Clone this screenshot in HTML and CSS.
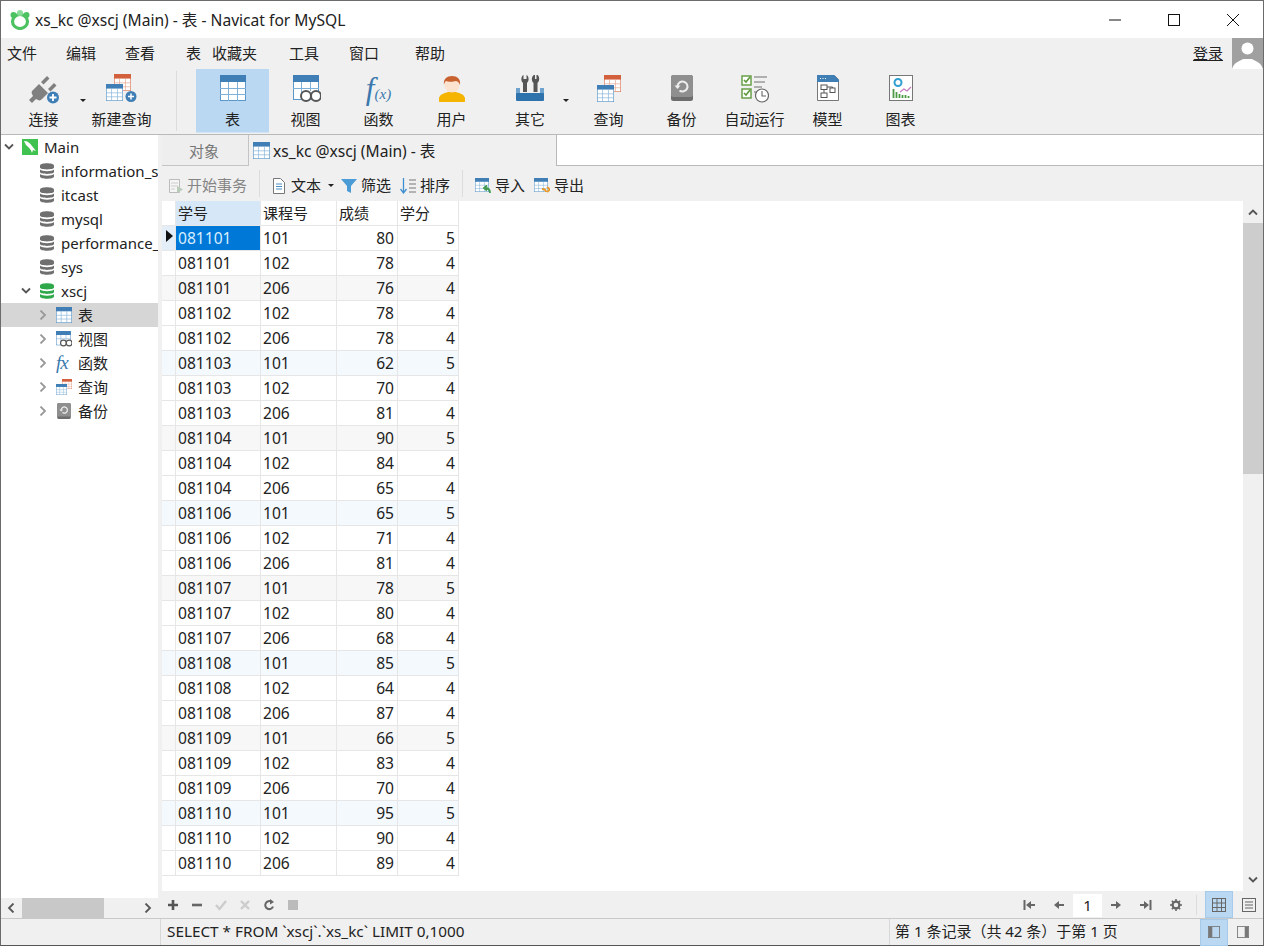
FILE: index.html
```html
<!DOCTYPE html>
<html lang="zh-CN">
<head>
  <meta charset="UTF-8">
  <title>xs_kc @xscj (Main) - 表 - Navicat for MySQL</title>
  <link rel="stylesheet" href="styles.css">
</head>
<body>
  <svg class="defs" width="0" height="0">
    <symbol id="i-table" viewBox="0 0 26 26">
      <rect x="0.5" y="0.5" width="25" height="25" fill="#fff" stroke="#5b97c9"/>
      <rect x="0" y="0" width="26" height="7" fill="#3f7fb6"/>
      <path d="M0 13.5h26M0 19.5h26M8.5 7v19M17.5 7v19" stroke="#7fb0d8" fill="none"/>
    </symbol>
    <symbol id="i-table-red" viewBox="0 0 26 26">
      <rect x="0.5" y="0.5" width="25" height="25" fill="#fff" stroke="#d9795a"/>
      <rect x="0" y="0" width="26" height="7" fill="#d2603d"/>
      <path d="M0 13.5h26M0 19.5h26M8.5 7v19M17.5 7v19" stroke="#e3a48e" fill="none"/>
    </symbol>
    <symbol id="i-view" viewBox="0 0 28 28">
      <rect x="0.5" y="0.5" width="25" height="24" fill="#fff" stroke="#5b97c9"/>
      <rect x="0" y="0" width="26" height="7" fill="#3f7fb6"/>
      <path d="M0 13.5h26M8.5 7v18M17.5 7v9" stroke="#7fb0d8" fill="none"/>
      <circle cx="13" cy="21" r="5" fill="#fff" stroke="#555" stroke-width="2"/>
      <circle cx="23" cy="21" r="5" fill="#fff" stroke="#555" stroke-width="2"/>
    </symbol>
    <symbol id="i-user" viewBox="0 0 26 28">
      <path d="M0 27v-4c1-4 6-5 9-6h8c3 1 8 2 9 6v4z" fill="#f4b400"/>
      <circle cx="13" cy="10" r="7.5" fill="#fbe3d0"/>
      <path d="M5 10c-1-6 3-9 8-9s9 3 8 9c-1-3-3-4-4-4-3 1-8 1-10 0-1 1-2 2-2 4z" fill="#c8622f"/>
    </symbol>
    <symbol id="i-tools" viewBox="0 0 28 28">
      <path d="M9 1v4h1.500V1C13 2 13.500 7 11 9v9H7V9C4.500 7 5 2 7.500 1v4H9z" fill="#555"/>
      <path d="M18 1h1v4h1.500V1h1c2 1 2.500 6 0 8v9h-4V9c-2.500-2-2-7 .5-8z" fill="#555"/>
      <path d="M0 14h4v5h20v-5h4v6H0z" fill="#6fa3cf"/>
      <rect x="0" y="19" width="28" height="8" rx="1" fill="#2f73ad"/>
    </symbol>
    <symbol id="i-backup" viewBox="0 0 22 26">
      <rect width="22" height="26" rx="2.5" fill="#6d6d6d"/>
      <rect y="0" width="22" height="22" rx="2.5" fill="#8f8f8f"/>
      <path d="M6.5 11a5 5 0 1 1 2 4.5" fill="none" stroke="#eee" stroke-width="2"/>
      <path d="M3.5 10.5h6l-3 3.5z" fill="#eee"/>
    </symbol>
    <symbol id="i-auto" viewBox="0 0 28 28">
      <rect x="1" y="1" width="9" height="9" fill="#fff" stroke="#5e9a3b" stroke-width="1.4"/>
      <rect x="1" y="14" width="9" height="9" fill="#fff" stroke="#5e9a3b" stroke-width="1.4"/>
      <path d="M3 5l2 2 4-5M3 18l2 2 4-5" fill="none" stroke="#5e9a3b" stroke-width="1.6"/>
      <path d="M13 2h13M13 7h11M13 12h8M13 17h3" stroke="#999" stroke-width="1.6"/>
      <circle cx="21" cy="20.5" r="6.5" fill="#fff" stroke="#666" stroke-width="1.2"/>
      <path d="M21 16v5l4 0" fill="none" stroke="#666" stroke-width="1.1"/>
    </symbol>
    <symbol id="i-model" viewBox="0 0 22 26">
      <path d="M.5.5h17l4 4v21H.5z" fill="#fff" stroke="#777"/>
      <path d="M0 0h17l5 5v2H0z" fill="#3f7fb6"/>
      <path d="M3 3.5h1M5.5 3.5h1M8 3.5h1" stroke="#fff"/>
      <rect x="4" y="10" width="6" height="4.5" fill="none" stroke="#555"/>
      <rect x="13" y="13" width="5" height="4.5" fill="none" stroke="#555"/>
      <rect x="4" y="18" width="6" height="4.5" fill="none" stroke="#555"/>
      <path d="M10 12h5.5v1M7 14.5V18" fill="none" stroke="#555"/>
    </symbol>
    <symbol id="i-chart" viewBox="0 0 24 26">
      <rect x="0.5" y="0.5" width="23" height="25" fill="#fff" stroke="#777"/>
      <circle cx="9" cy="7.5" r="3.5" fill="none" stroke="#2f9fd0" stroke-width="2"/>
      <path d="M11 17l4-3 3 2 4-4" fill="none" stroke="#c77dc0" stroke-width="1.3"/>
      <path d="M4.5 23v-9M7.5 23v-6M10.5 23v-4M13.5 23v-3M16.5 23v-3M19.5 23v-2" stroke="#4b9b46" stroke-width="1.8"/>
    </symbol>
    <symbol id="i-db" viewBox="0 0 16 18">
      <path d="M1 3.5C1 .5 15 .5 15 3.5v2C15 8 1 8 1 5.5z"/>
      <path d="M1 7.5c2 2.2 12 2.2 14 0V10c0 2.500-14 2.500-14 0z"/>
      <path d="M1 12c2 2.2 12 2.2 14 0v2.500c0 3-14 3-14 0z"/>
    </symbol>
    <symbol id="i-open" viewBox="0 0 10 10">
      <path d="M1 2.5l4 4 4-4" fill="none" stroke="currentColor" stroke-width="1.8"/>
    </symbol>
    <symbol id="i-closed" viewBox="0 0 10 10">
      <path d="M2.5 0.5L7 5l-4.500 4.500" fill="none" stroke="currentColor" stroke-width="1.8"/>
    </symbol>
  </svg>

  <div class="window">
    <header class="titlebar">
      <svg class="app-logo" viewBox="0 0 20 20">
        <ellipse cx="10" cy="11.5" rx="7.5" ry="7" fill="none" stroke="#4cc261" stroke-width="3.2"/>
        <circle cx="3.5" cy="5" r="3" fill="#4cc261"/>
        <circle cx="10" cy="3" r="3" fill="#8adb97"/>
        <circle cx="16.5" cy="5" r="3" fill="#4cc261"/>
      </svg>
      <span class="title-text">xs_kc @xscj (Main) - 表 - Navicat for MySQL</span>
      <div class="win-buttons">
        <svg viewBox="0 0 12 12"><path d="M0 6h12" stroke="#111"/></svg>
        <svg viewBox="0 0 12 12"><rect x="0.5" y="0.5" width="11" height="11" fill="none" stroke="#111"/></svg>
        <svg viewBox="0 0 12 12"><path d="M0 0l12 12M12 0L0 12" stroke="#111"/></svg>
      </div>
    </header>

    <nav class="menubar">
      <div class="menu-items">
        <span>文件</span><span>编辑</span><span>查看</span><span>表</span><span>收藏夹</span><span>工具</span><span>窗口</span><span>帮助</span>
      </div>
      <span class="login">登录</span>
      <div class="avatar">
        <svg viewBox="0 0 31 31"><circle cx="15.5" cy="10.5" r="6" fill="#fff"/><path d="M0 31c2-7 8-8 11-10h9c3 2 9 3 11 10z" fill="#fff"/></svg>
      </div>
    </nav>

    <div class="toolbar">
      <div class="tool">
        <svg class="tool-icon" viewBox="0 0 32 32">
          <path d="M1 26l4-4-1-2c-1-2 0-3 1-4l6-6 9 9-6 6c-1 1-2 2-4 1l-2-1-4 4z" fill="#808080"/>
          <path d="M13 8l6-6 2.500 2.500-6 6zM20 15l6-6 2.500 2.500-6 6z" fill="#808080"/>
          <circle cx="25" cy="23.5" r="6" fill="#3f7fb6"/>
          <path d="M21.5 23.5h7M25 20v7" stroke="#fff" stroke-width="1.8"/>
        </svg>
        <span>连接</span>
      </div>
      <span class="drop-arrow"></span>
      <div class="tool">
        <svg class="tool-icon" viewBox="0 0 32 32">
          <use href="#i-table-red" x="8" y="0" width="17" height="17"/>
          <use href="#i-table" x="0" y="10" width="17" height="17"/>
          <circle cx="25" cy="22.5" r="5.5" fill="#3f7fb6"/>
          <path d="M22 22.5h6M25 19.5v6" stroke="#fff" stroke-width="1.5"/>
        </svg>
        <span>新建查询</span>
      </div>
      <div class="tool-sep"></div>
      <div class="tool active">
        <svg class="tool-icon" viewBox="0 0 32 32"><use href="#i-table" x="3" y="1" width="26" height="26"/></svg>
        <span>表</span>
      </div>
      <div class="tool">
        <svg class="tool-icon" viewBox="0 0 32 32"><use href="#i-view" x="3" y="1" width="28" height="28"/></svg>
        <span>视图</span>
      </div>
      <div class="tool">
        <div class="tool-icon fx"><i>f</i><small>(x)</small></div>
        <span>函数</span>
      </div>
      <div class="tool">
        <svg class="tool-icon" viewBox="0 0 32 32"><use href="#i-user" x="3" y="1" width="26" height="28"/></svg>
        <span>用户</span>
      </div>
      <div class="tool tool-wide">
        <svg class="tool-icon" viewBox="0 0 32 32"><use href="#i-tools" x="2" y="0" width="28" height="28"/></svg>
        <span>其它</span>
        <span class="drop-arrow over"></span>
      </div>
      <div class="tool">
        <svg class="tool-icon" viewBox="0 0 32 32">
          <use href="#i-table-red" x="11" y="1" width="17" height="17"/>
          <use href="#i-table" x="4" y="11" width="17" height="17"/>
        </svg>
        <span>查询</span>
      </div>
      <div class="tool">
        <svg class="tool-icon" viewBox="0 0 32 32"><use href="#i-backup" x="5" y="1" width="22" height="26"/></svg>
        <span>备份</span>
      </div>
      <div class="tool">
        <svg class="tool-icon" viewBox="0 0 32 32"><use href="#i-auto" x="2" y="1" width="28" height="28"/></svg>
        <span>自动运行</span>
      </div>
      <div class="tool">
        <svg class="tool-icon" viewBox="0 0 32 32"><use href="#i-model" x="5" y="1" width="22" height="26"/></svg>
        <span>模型</span>
      </div>
      <div class="tool">
        <svg class="tool-icon" viewBox="0 0 32 32"><use href="#i-chart" x="4" y="1" width="24" height="26"/></svg>
        <span>图表</span>
      </div>
    </div>

    <div class="workspace">
      <aside class="sidebar">
        <ul class="tree">
          <li class="node">
            <svg class="caret"><use href="#i-open"/></svg>
            <svg class="node-icon" viewBox="0 0 16 16">
              <rect width="16" height="16" fill="#3fc24f"/>
              <path d="M2 2c4 0 6 2 8 5l4 5-3-1-1 3c-1-4-4-6-6-8z" fill="#fff"/>
            </svg>
            <span>Main</span>
          </li>
          <li class="node lvl1"><svg class="node-icon db"><use href="#i-db"/></svg><span>information_schema</span></li>
          <li class="node lvl1"><svg class="node-icon db"><use href="#i-db"/></svg><span>itcast</span></li>
          <li class="node lvl1"><svg class="node-icon db"><use href="#i-db"/></svg><span>mysql</span></li>
          <li class="node lvl1"><svg class="node-icon db"><use href="#i-db"/></svg><span>performance_schema</span></li>
          <li class="node lvl1"><svg class="node-icon db"><use href="#i-db"/></svg><span>sys</span></li>
          <li class="node lvl1b">
            <svg class="caret"><use href="#i-open"/></svg>
            <svg class="node-icon db on"><use href="#i-db"/></svg><span>xscj</span>
          </li>
          <li class="node lvl2 selected">
            <svg class="caret closed"><use href="#i-closed"/></svg>
            <svg class="node-icon" viewBox="0 0 16 16"><use href="#i-table" width="16" height="16"/></svg><span>表</span>
          </li>
          <li class="node lvl2">
            <svg class="caret closed"><use href="#i-closed"/></svg>
            <svg class="node-icon" viewBox="0 0 16 16"><use href="#i-view" width="16" height="16"/></svg><span>视图</span>
          </li>
          <li class="node lvl2">
            <svg class="caret closed"><use href="#i-closed"/></svg>
            <span class="node-icon fx-small"><i>f</i><i>x</i></span><span>函数</span>
          </li>
          <li class="node lvl2">
            <svg class="caret closed"><use href="#i-closed"/></svg>
            <svg class="node-icon" viewBox="0 0 16 16">
              <use href="#i-table-red" x="6" y="0" width="10" height="10"/>
              <use href="#i-table" x="0" y="5" width="11" height="11"/>
            </svg><span>查询</span>
          </li>
          <li class="node lvl2">
            <svg class="caret closed"><use href="#i-closed"/></svg>
            <svg class="node-icon" viewBox="0 0 16 16"><use href="#i-backup" x="1" y="0" width="14" height="16"/></svg><span>备份</span>
          </li>
        </ul>
        <div class="hscroll">
          <svg class="hs-arrow"><use href="#i-closed" transform="matrix(-1 0 0 1 10 0)"/></svg>
          <div class="hs-track"><div class="hs-thumb"></div></div>
          <svg class="hs-arrow"><use href="#i-closed"/></svg>
        </div>
      </aside>

      <main class="main">
        <div class="tabs">
          <div class="tab tab-objects">对象</div>
          <div class="tab tab-current">
            <svg class="tab-icon"><use href="#i-table"/></svg>
            <span>xs_kc @xscj (Main) - 表</span>
          </div>
          <div class="tab-rest"></div>
        </div>

        <div class="grid-tools">
          <div class="gt-item muted gt-begin">
            <svg class="gt-icon" viewBox="0 0 16 16">
              <path d="M1.5 1.5h10v13h-10z" fill="#f5f5f5" stroke="#bbb"/>
              <path d="M3 5h7M3 8h7M3 11h4" stroke="#ccc"/>
              <path d="M9 8l6 3.500-6 3.500z" fill="#b9cbb9"/>
            </svg>
            <span>开始事务</span>
          </div>
          <div class="gt-sep"></div>
          <div class="gt-item gt-text">
            <svg class="gt-icon" viewBox="0 0 16 16">
              <path d="M2.5.5h7l4 4v11h-11z" fill="#fff" stroke="#777"/>
              <path d="M5 6h6M5 8.5h6M5 11h6" stroke="#4a8cc4"/>
            </svg>
            <span>文本</span>
            <span class="drop-arrow small"></span>
          </div>
          <div class="gt-item gt-filter">
            <svg class="gt-icon" viewBox="0 0 16 16"><path d="M0 1h16l-6 7v7l-4-2V8z" fill="#4b9bd6"/></svg>
            <span>筛选</span>
          </div>
          <div class="gt-item gt-sort">
            <svg class="gt-icon" viewBox="0 0 16 16">
              <path d="M3.5 0v14M.5 11l3 4 3-4" fill="none" stroke="#3f8fd0" stroke-width="1.3"/>
              <path d="M9 2h7M9 6h7M9 10h7M9 14h7" stroke="#777"/>
            </svg>
            <span>排序</span>
          </div>
          <div class="gt-sep"></div>
          <div class="gt-item gt-import">
            <svg class="gt-icon" viewBox="0 0 16 16">
              <use href="#i-table" width="14" height="14"/>
              <path d="M15 15c0-4-2-5-5-5M12 7.5L9 10l3 2.5" fill="none" stroke="#3f9a4f" stroke-width="1.8"/>
            </svg>
            <span>导入</span>
          </div>
          <div class="gt-item gt-export">
            <svg class="gt-icon" viewBox="0 0 16 16">
              <use href="#i-table" width="14" height="14"/>
              <path d="M8 11c3 0 4 1 4 3M13 9l3 2.5-3 2.5" fill="none" stroke="#e89a2c" stroke-width="1.8"/>
            </svg>
            <span>导出</span>
          </div>
        </div>

        <div class="grid-area">
          <div class="grid-view">
            <table class="grid">
              <colgroup><col class="c0"><col class="c1"><col class="c2"><col class="c3"><col class="c4"></colgroup>
              <thead>
                <tr><th class="mark"></th><th class="sorted">学号</th><th>课程号</th><th>成绩</th><th>学分</th></tr>
              </thead>
              <tbody>
                <tr class="current"><td class="mark"><span class="row-arrow"></span></td><td class="sel">081101</td><td>101</td><td class="num">80</td><td class="num">5</td></tr>
                <tr><td class="mark"></td><td>081101</td><td>102</td><td class="num">78</td><td class="num">4</td></tr>
                <tr><td class="mark"></td><td>081101</td><td>206</td><td class="num">76</td><td class="num">4</td></tr>
                <tr><td class="mark"></td><td>081102</td><td>102</td><td class="num">78</td><td class="num">4</td></tr>
                <tr><td class="mark"></td><td>081102</td><td>206</td><td class="num">78</td><td class="num">4</td></tr>
                <tr><td class="mark"></td><td>081103</td><td>101</td><td class="num">62</td><td class="num">5</td></tr>
                <tr><td class="mark"></td><td>081103</td><td>102</td><td class="num">70</td><td class="num">4</td></tr>
                <tr><td class="mark"></td><td>081103</td><td>206</td><td class="num">81</td><td class="num">4</td></tr>
                <tr><td class="mark"></td><td>081104</td><td>101</td><td class="num">90</td><td class="num">5</td></tr>
                <tr><td class="mark"></td><td>081104</td><td>102</td><td class="num">84</td><td class="num">4</td></tr>
                <tr><td class="mark"></td><td>081104</td><td>206</td><td class="num">65</td><td class="num">4</td></tr>
                <tr><td class="mark"></td><td>081106</td><td>101</td><td class="num">65</td><td class="num">5</td></tr>
                <tr><td class="mark"></td><td>081106</td><td>102</td><td class="num">71</td><td class="num">4</td></tr>
                <tr><td class="mark"></td><td>081106</td><td>206</td><td class="num">81</td><td class="num">4</td></tr>
                <tr><td class="mark"></td><td>081107</td><td>101</td><td class="num">78</td><td class="num">5</td></tr>
                <tr><td class="mark"></td><td>081107</td><td>102</td><td class="num">80</td><td class="num">4</td></tr>
                <tr><td class="mark"></td><td>081107</td><td>206</td><td class="num">68</td><td class="num">4</td></tr>
                <tr><td class="mark"></td><td>081108</td><td>101</td><td class="num">85</td><td class="num">5</td></tr>
                <tr><td class="mark"></td><td>081108</td><td>102</td><td class="num">64</td><td class="num">4</td></tr>
                <tr><td class="mark"></td><td>081108</td><td>206</td><td class="num">87</td><td class="num">4</td></tr>
                <tr><td class="mark"></td><td>081109</td><td>101</td><td class="num">66</td><td class="num">5</td></tr>
                <tr><td class="mark"></td><td>081109</td><td>102</td><td class="num">83</td><td class="num">4</td></tr>
                <tr><td class="mark"></td><td>081109</td><td>206</td><td class="num">70</td><td class="num">4</td></tr>
                <tr><td class="mark"></td><td>081110</td><td>101</td><td class="num">95</td><td class="num">5</td></tr>
                <tr><td class="mark"></td><td>081110</td><td>102</td><td class="num">90</td><td class="num">4</td></tr>
                <tr><td class="mark"></td><td>081110</td><td>206</td><td class="num">89</td><td class="num">4</td></tr>
              </tbody>
            </table>
          </div>
          <div class="vscroll">
            <svg class="vs-arrow"><use href="#i-open" transform="matrix(1 0 0 -1 0 10)"/></svg>
            <div class="vs-track"><div class="vs-thumb"></div></div>
            <svg class="vs-arrow"><use href="#i-open"/></svg>
          </div>
        </div>

        <div class="grid-foot">
          <div class="foot-left">
            <svg viewBox="0 0 12 12"><path d="M6 1v10M1 6h10" stroke="#555" stroke-width="2.6"/></svg>
            <svg viewBox="0 0 12 12"><path d="M1 6h10" stroke="#666" stroke-width="2.6"/></svg>
            <svg viewBox="0 0 12 12"><path d="M1 6l3.500 4L11 2" fill="none" stroke="#ccc" stroke-width="2.4"/></svg>
            <svg viewBox="0 0 12 12"><path d="M2 2l8 8M10 2l-8 8" stroke="#ccc" stroke-width="2.4"/></svg>
            <svg viewBox="0 0 12 12"><path d="M10 7.5A4 4 0 1 1 8.5 2.800" fill="none" stroke="#666" stroke-width="2"/><path d="M7 0l4 3-4 2.500z" fill="#666"/></svg>
            <svg viewBox="0 0 12 12"><rect x="1" y="1" width="10" height="10" fill="#bbb"/></svg>
          </div>
          <div class="foot-right">
            <svg viewBox="0 0 12 12"><path d="M1.5 1v10" stroke="#666" stroke-width="2"/><path d="M3 6l5-4v3h4v2H8v3z" fill="#666"/></svg>
            <svg viewBox="0 0 12 12"><path d="M1 6l5-4v3h5v2H6v3z" fill="#666"/></svg>
            <div class="page-input">1</div>
            <svg viewBox="0 0 12 12"><path d="M11 6L6 2v3H1v2h5v3z" fill="#666"/></svg>
            <svg viewBox="0 0 12 12"><path d="M10.5 1v10" stroke="#666" stroke-width="2"/><path d="M9 6L4 2v3H0v2h4v3z" fill="#666"/></svg>
            <svg viewBox="0 0 12 12"><circle cx="6" cy="6" r="3.4" fill="none" stroke="#666" stroke-width="2.2"/><path d="M6 0v2.500M6 9.500V12M0 6h2.500M9.500 6H12M1.800 1.800l1.700 1.700M8.500 8.500l1.700 1.700M1.800 10.200l1.700-1.700M8.500 3.500l1.700-1.700" stroke="#666" stroke-width="1.5"/></svg>
            <div class="foot-sep"></div>
            <div class="view-btn on">
              <svg viewBox="0 0 14 14"><rect x="0.5" y="0.5" width="13" height="13" fill="none" stroke="#666"/><path d="M0 5h14M0 9.5h14M5 0v14M9.5 0v14" stroke="#666"/></svg>
            </div>
            <div class="view-btn">
              <svg viewBox="0 0 14 14"><rect x="0.5" y="0.5" width="13" height="13" fill="none" stroke="#666"/><path d="M3 4h8M3 7h8M3 10h8" stroke="#666"/></svg>
            </div>
          </div>
        </div>
      </main>
    </div>

    <footer class="statusbar">
      <div class="st-left"></div>
      <div class="st-sql">SELECT * FROM `xscj`.`xs_kc` LIMIT 0,1000</div>
      <div class="st-info">第 1 条记录（共 42 条）于第 1 页</div>
      <div class="st-views">
        <div class="view-btn on">
          <svg viewBox="0 0 14 14"><rect x="0.5" y="0.5" width="13" height="13" fill="none" stroke="#777"/><rect x="1" y="1" width="4" height="12" fill="#777"/></svg>
        </div>
        <div class="view-btn">
          <svg viewBox="0 0 14 14"><rect x="0.5" y="0.5" width="13" height="13" fill="none" stroke="#777"/><rect x="9" y="1" width="4" height="12" fill="#777"/></svg>
        </div>
      </div>
    </footer>
  </div>
</body>
</html>
```

FILE: styles.css
```css
* {
  box-sizing: border-box;
}
html, body {
  margin: 0;
  height: 100%;
  overflow: hidden;
}
body {
  font-family: "Noto Sans", "Noto Sans CJK SC", sans-serif;
  font-size: 15px;
  color: #222;
  background: #f0f0f0;
}
.defs {
  position: absolute;
}
svg {
  display: block;
  flex: none;
}
ul {
  list-style: none;
  margin: 0;
  padding: 0;
}

.window {
  height: 946px;
  display: flex;
  flex-direction: column;
  border: 1px solid #6b6b6b;
  border-bottom-color: #555;
}

/* title + menu */
.titlebar {
  height: 37px;
  flex: none;
  display: flex;
  align-items: center;
  background: #fff;
  padding-left: 9px;
}
.app-logo {
  width: 20px;
  height: 20px;
  margin-right: 5px;
}
.title-text {
  font-size: 15.6px;
  white-space: nowrap;
}
.win-buttons {
  margin-left: auto;
  display: flex;
  gap: 47px;
  padding-right: 24px;
}
.win-buttons svg {
  width: 12px;
  height: 12px;
}
.menubar {
  height: 31px;
  flex: none;
  display: flex;
  align-items: center;
  padding-left: 6px;
}
.menu-items {
  display: grid;
  grid-template-columns: 59px 59px 61px 26px 77px 60px 66px auto;
  margin-bottom: 3px;
}
.login {
  margin-left: auto;
  margin-right: 9px;
  margin-bottom: 3px;
  text-decoration: underline;
}
.avatar {
  width: 31px;
  height: 31px;
  background: #a0a0a0;
}

/* main toolbar */
.toolbar {
  height: 66px;
  flex: none;
  display: flex;
  padding-left: 6px;
  border-bottom: 1px solid #b9b9b9;
}
.tool {
  position: relative;
  width: 73px;
  height: 64px;
  flex: none;
  display: flex;
  flex-direction: column;
  align-items: center;
  padding-top: 5px;
}
.tool > span:not(.drop-arrow) {
  margin-top: 2px;
  white-space: nowrap;
}
.tool-icon {
  width: 32px;
  height: 32px;
}
.tool.active {
  background: #bad8f1;
  border-bottom: 1px solid #d3e5f5;
}
.tool-wide {
  width: 84px;
}
.tool-sep {
  width: 1px;
  height: 60px;
  margin: 2px 19px 0 18px;
  background: #dcdcdc;
}
.drop-arrow {
  display: block;
  flex: none;
  width: 6px;
  height: 0;
  margin-top: 30px;
  border: 3px solid transparent;
  border-top-color: #222;
  border-bottom: 0;
}
.toolbar > .drop-arrow {
  margin-right: -1px;
}
.drop-arrow.over {
  position: absolute;
  right: 3px;
  top: 0;
}
.drop-arrow.small {
  margin: 0 0 0 7px;
}
.fx {
  text-align: center;
  font-family: "Liberation Serif", serif;
  color: #3a78ad;
  line-height: 30px;
  white-space: nowrap;
}
.fx i {
  font-size: 31px;
}
.fx small {
  font-size: 15px;
  font-style: italic;
}

/* workspace */
.workspace {
  flex: 1;
  min-height: 0;
  display: flex;
}
.sidebar {
  width: 157px;
  flex: none;
  display: flex;
  flex-direction: column;
  margin-right: 4px;
}
.tree {
  flex: 1;
  background: #fff;
  overflow: hidden;
}
.node {
  height: 24px;
  display: flex;
  align-items: center;
  white-space: nowrap;
  overflow: hidden;
  padding-left: 3px;
}
.lvl1 {
  padding-left: 38px;
}
.lvl1b {
  padding-left: 20px;
}
.lvl2 {
  padding-left: 37px;
}
.lvl2 > span:last-child {
  padding-bottom: 2px;
}
.selected {
  background: #d6d6d6;
}
.caret {
  width: 10px;
  height: 10px;
  margin-right: 8px;
  color: #555;
}
.caret.closed {
  color: #999;
}
.node-icon {
  width: 16px;
  height: 16px;
  margin-right: 6px;
  flex: none;
}
.node-icon.db {
  fill: #6f6f6f;
  height: 18px;
}
.node-icon.db.on {
  fill: #2fa84a;
}
.fx-small {
  font-family: "Liberation Serif", serif;
  color: #3a78ad;
  font-size: 19px;
  line-height: 16px;
  letter-spacing: -1px;
}
.hscroll {
  height: 20px;
  flex: none;
  display: flex;
  align-items: center;
  background: #f0f0f0;
}
.hs-arrow {
  width: 10px;
  height: 10px;
  margin: 0 5px;
  color: #555;
}
.hs-track {
  flex: 1;
  height: 100%;
}
.hs-thumb {
  width: 82px;
  height: 100%;
  margin-left: 1px;
  background: #c8c8c8;
}

.main {
  flex: 1;
  min-width: 0;
  display: flex;
  flex-direction: column;
}
.tabs {
  height: 31px;
  flex: none;
  display: flex;
}
.tab {
  display: flex;
  align-items: center;
  height: 31px;
}
.tab-objects {
  width: 87px;
  justify-content: center;
  padding-right: 2px;
  color: #777;
  background: #eee;
  border-right: 1px solid #c4c4c4;
  border-bottom: 1px solid #c4c4c4;
}
.tab-current {
  width: 307px;
  padding-left: 4px;
  background: #f0f0f0;
  font-size: 15.6px;
}
.tab-icon {
  width: 17px;
  height: 17px;
  margin-right: 3px;
}
.tab-rest {
  flex: 1;
  background: #fff;
  border-left: 1px solid #b9b9b9;
  border-bottom: 1px solid #b9b9b9;
}

.grid-tools {
  height: 35px;
  flex: none;
  display: flex;
  align-items: center;
  padding: 4px 0 0 6px;
}
.gt-item {
  display: flex;
  align-items: center;
  white-space: nowrap;
}
.gt-icon {
  width: 16px;
  height: 16px;
  margin-right: 4px;
}
.muted {
  color: #858585;
}
.gt-icon + span {
  line-height: 1;
}
.gt-begin .gt-icon {
  margin-right: 3px;
}
.gt-sep {
  width: 1px;
  height: 27px;
  background: #dcdcdc;
  margin: -4px 11px 0 12px;
}
.gt-filter {
  margin-left: 7px;
}
.gt-sort {
  margin-left: 9px;
}
.gt-import {
  margin-left: 1px;
}
.gt-export {
  margin-left: 9px;
}

/* data grid */
.grid-area {
  flex: 1;
  min-height: 0;
  display: flex;
}
.grid-view {
  flex: 1;
  min-width: 0;
  background: #fff;
  overflow: hidden;
}
.grid {
  border-collapse: separate;
  border-spacing: 0;
  table-layout: fixed;
  width: 297px;
  font-size: 15.6px;
}
.c0 { width: 14px; }
.c1 { width: 85px; }
.c2 { width: 76px; }
.c3 { width: 61px; }
.c4 { width: 61px; }
.grid th, .grid td {
  height: 25px;
  padding: 2px 2px 0;
  font-weight: normal;
  text-align: left;
  line-height: 1;
  white-space: nowrap;
  border-right: 1px solid #e6e6e6;
  border-bottom: 1px solid #e6e6e6;
}
.grid th {
  font-size: 15px;
  padding-top: 0;
}
.grid th.sorted {
  background: #d6e8f7;
}
.grid td.num {
  text-align: right;
  padding-right: 3px;
}
.grid .mark {
  padding: 0;
}
.grid tbody tr:nth-child(6n+3) td {
  background: #f7f7f7;
}
.grid tbody tr:nth-child(6n) td {
  background: #f4f9fd;
}
.grid tr.current td.mark {
  background: #e3eef8;
}
.grid td.sel {
  background: #0078d7;
  color: #d8efff;
}
.row-arrow {
  display: block;
  width: 0;
  height: 0;
  margin: 0 0 4px 4px;
  border-left: 7px solid #111;
  border-top: 6px solid transparent;
  border-bottom: 6px solid transparent;
}
.vscroll {
  width: 20px;
  flex: none;
  display: flex;
  flex-direction: column;
  align-items: center;
  background: #f0f0f0;
}
.vs-arrow {
  width: 10px;
  height: 10px;
  margin: 6px 0;
  color: #555;
}
.vs-track {
  flex: 1;
  width: 100%;
}
.vs-thumb {
  height: 251px;
  background: #cdcdcd;
}
.grid-foot {
  height: 27px;
  flex: none;
  display: flex;
  justify-content: space-between;
  align-items: center;
}
.foot-left {
  display: flex;
  gap: 12px;
  padding-left: 5px;
}
.foot-left svg {
  width: 12px;
  height: 12px;
}
.foot-right {
  display: flex;
  align-items: center;
  height: 100%;
}
.foot-right > svg {
  width: 12px;
  height: 12px;
  margin: 0 9px;
}
.page-input {
  width: 29px;
  height: 23px;
  align-self: flex-end;
  margin: 0 -1px 1px;
  background: #fff;
  text-align: center;
  line-height: 23px;
}
.foot-sep {
  width: 1px;
  height: 20px;
  background: #dcdcdc;
  margin: 0 8px 0 5px;
}
.view-btn {
  width: 28px;
  height: 27px;
  display: flex;
  align-items: center;
  justify-content: center;
}
.view-btn svg {
  width: 14px;
  height: 14px;
}
.view-btn.on {
  background: #bad8f1;
  border: 1px solid #a6cbea;
}
.foot-right .view-btn + .view-btn {
  margin-left: 2px;
}

/* status */
.statusbar {
  height: 27px;
  flex: none;
  display: flex;
  align-items: center;
  border-top: 1px solid #c9c9c9;
}
.st-left {
  width: 160px;
  height: 100%;
  border-right: 1px solid #d8d8d8;
}
.st-sql {
  flex: 1;
  padding: 0 0 2px 6px;
  font-size: 15.3px;
  white-space: nowrap;
}
.st-info {
  width: 311px;
  height: 100%;
  line-height: 24px;
  padding-left: 5px;
  border-left: 1px solid #d8d8d8;
  white-space: nowrap;
}
.st-views {
  display: flex;
  gap: 1px;
  padding-right: 6px;
}
.st-views svg {
  width: 12px;
  height: 12px;
}
```
